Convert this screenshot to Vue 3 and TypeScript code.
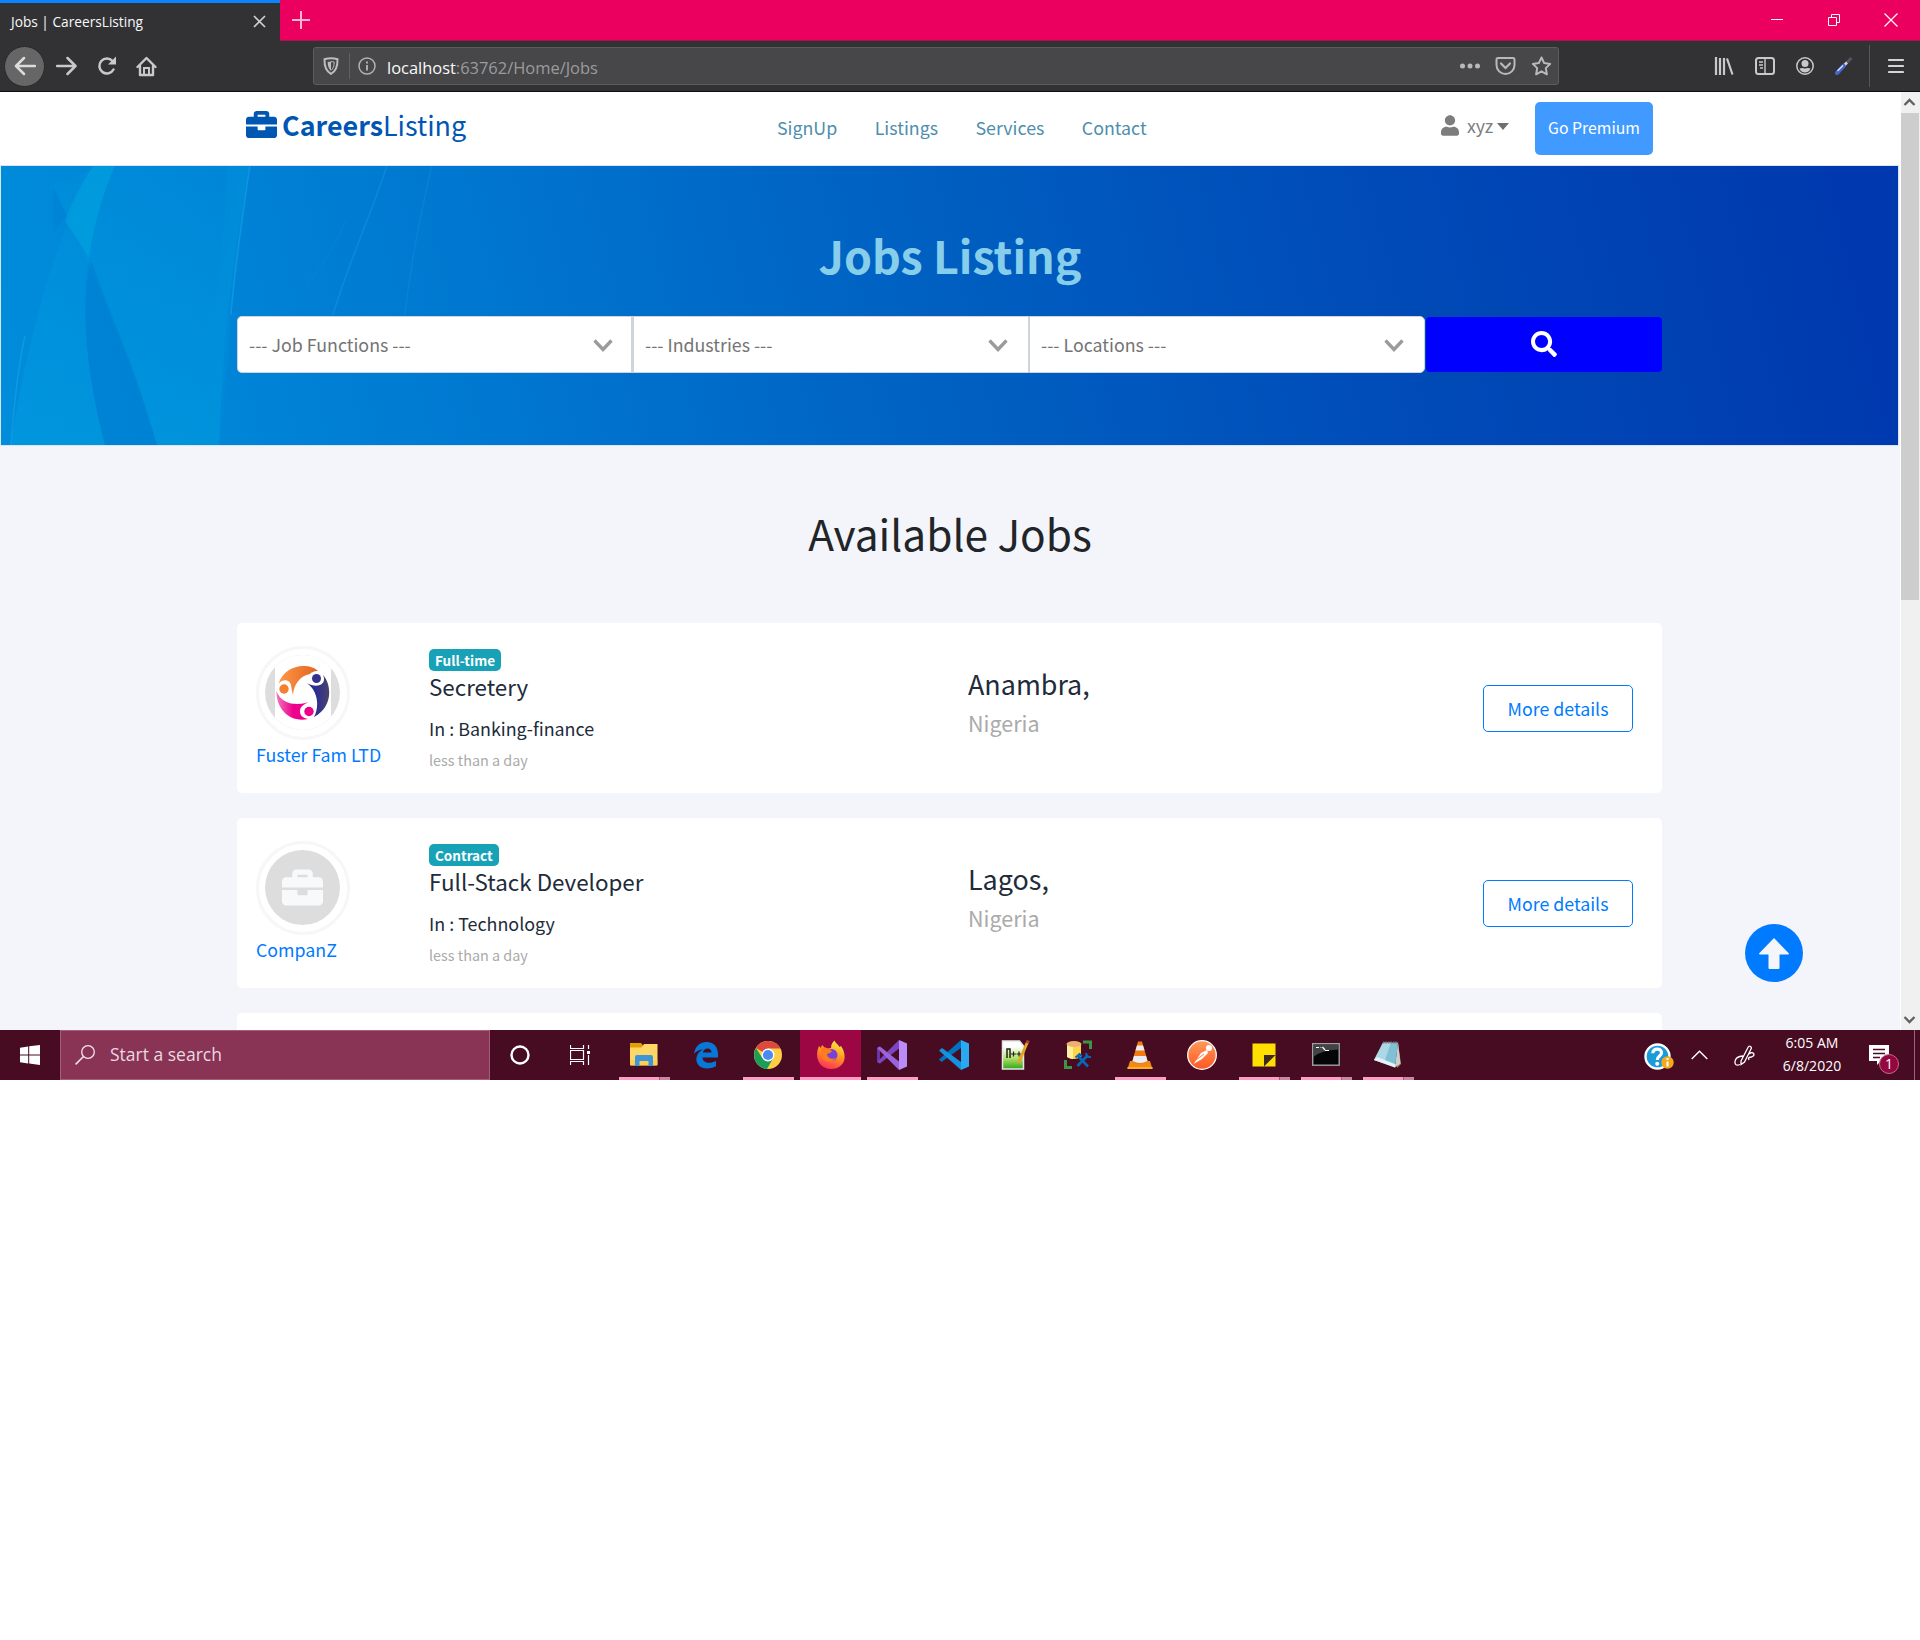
<script setup lang="ts">
interface Job { company: string; type: string; title: string; field: string; age: string; city: string; country: string; logo: boolean }
const jobs: Job[] = [
  { company: 'Fuster Fam LTD', type: 'Full-time', title: 'Secretery', field: 'Banking-finance', age: 'less than a day', city: 'Anambra,', country: 'Nigeria', logo: true },
  { company: 'CompanZ', type: 'Contract', title: 'Full-Stack Developer', field: 'Technology', age: 'less than a day', city: 'Lagos,', country: 'Nigeria', logo: false },
]
const links = ['SignUp', 'Listings', 'Services', 'Contact']
const filters = ['Job Functions', 'Industries', 'Locations']
const briefcase = 'M320 336c0 8.84-7.16 16-16 16h-96c-8.84 0-16-7.16-16-16v-48H0v144c0 25.6 22.4 48 48 48h416c25.6 0 48-22.4 48-48V288H320v48zm144-208h-80V80c0-25.6-22.4-48-48-48H176c-25.6 0-48 22.4-48 48v48H48c-25.6 0-48 22.4-48 48v80h512v-80c0-25.6-22.4-48-48-48zm-144 0H192V96h128v32z'
</script>

<template>
  <div class="screen">
    <header class="tabs">
      <div class="tab">
        <span class="m tab-title">Jobs | CareersListing</span>
        <svg class="tab-x" width="13" height="13" viewBox="0 0 13 13"><path d="M1 1l11 11M12 1L1 12" stroke="#d0d0d2" stroke-width="1.7" /></svg>
      </div>
      <svg class="plus" width="18" height="18" viewBox="0 0 18 18"><path d="M9 0v18M0 9h18" stroke="#fbb6d1" stroke-width="2" /></svg>
      <div class="win">
        <svg width="14" height="14" viewBox="0 0 14 14"><path d="M1 6.500h12" stroke="#fff" /></svg>
        <svg width="14" height="14" viewBox="0 0 14 14"><path d="M1.500 4.500h8v8h-8zM4.500 4.500v-3h8v8h-3" fill="none" stroke="#fff" /></svg>
        <svg width="14" height="14" viewBox="0 0 14 14"><path d="M.5.5l13 13M13.500.5l-13 13" stroke="#fff" stroke-width="1.200" /></svg>
      </div>
    </header>

    <div class="toolbar">
      <div class="tools-left">
        <span class="back"><svg width="22" height="20" viewBox="0 0 22 20"><path d="M21 10H2M10 2L2 10l8 8" fill="none" stroke="#dcdcdd" stroke-width="2.500" stroke-linecap="round" stroke-linejoin="round" /></svg></span>
        <svg width="22" height="20" viewBox="0 0 22 20"><path d="M1 10h18M11.500 2l8 8-8 8" fill="none" stroke="#c9c9ca" stroke-width="2.500" stroke-linecap="round" stroke-linejoin="round" /></svg>
        <svg width="20" height="20" viewBox="0 0 20 20"><path d="M16.500 13.500A7.500 7.500 0 1 1 15.500 5" fill="none" stroke="#c9c9ca" stroke-width="2.500" stroke-linecap="round" /><path d="M19 .5v8h-8z" fill="#c9c9ca" /></svg>
        <svg width="21" height="21" viewBox="0 0 21 21"><path d="M1.500 11L10.500 2l9 9M4 10v9h13v-9" fill="none" stroke="#c9c9ca" stroke-width="2.400" stroke-linecap="round" stroke-linejoin="round" /><path d="M8 19v-7h5v7" fill="none" stroke="#c9c9ca" stroke-width="2" /></svg>
      </div>
      <div class="url">
        <svg class="shield" width="16" height="18" viewBox="0 0 16 18"><path d="M8 1.200c2.500 0 4.500.3 6.500 1 .2 6.500-.8 11.500-6.500 14.600C2.300 13.700 1.300 8.700 1.500 2.200c2-.7 4-1 6.500-1z" fill="none" stroke="#bdbdbf" stroke-width="2" /><path d="M8 4.500v9C5.500 11.500 4.700 9 4.700 5z" fill="#bdbdbf" /><path d="M8 4.700c1.200 0 2.200.1 3.200.4 0 3.500-.8 6.300-3.200 8.300" fill="none" stroke="#bdbdbf" /></svg>
        <i class="url-sep"></i>
        <svg class="info" width="18" height="18" viewBox="0 0 18 18"><circle cx="9" cy="9" r="8" fill="none" stroke="#b1b1b3" stroke-width="1.500" /><path d="M9 8v5.500M9 4.500v2" stroke="#b1b1b3" stroke-width="1.900" /></svg>
        <span class="m url-text"><b>localhost</b>:63762/Home/Jobs</span>
        <div class="url-icons">
          <svg width="20" height="20" viewBox="0 0 20 20"><g fill="#b9b9bb"><circle cx="2.500" cy="10" r="2.500" /><circle cx="10" cy="10" r="2.500" /><circle cx="17.500" cy="10" r="2.500" /></g></svg>
          <svg width="21" height="20" viewBox="0 0 21 20"><path d="M3 2h15q1.500 0 1.500 1.500V9a9 9 0 0 1-18 0V3.500Q1.500 2 3 2z" fill="none" stroke="#b9b9bb" stroke-width="2" /><path d="M6 7.500l4.500 4.500L15 7.500" fill="none" stroke="#b9b9bb" stroke-width="2.200" stroke-linecap="round" /></svg>
          <svg width="21" height="20" viewBox="0 0 21 20"><path d="M10.500 1.500l2.700 5.600 6 .8-4.400 4.200 1.100 6.200-5.400-3-5.400 3 1.100-6.200L1.800 7.900l6-.8z" fill="none" stroke="#b9b9bb" stroke-width="2" stroke-linejoin="round" /></svg>
        </div>
      </div>
      <div class="tools-right">
        <svg width="20" height="18" viewBox="0 0 20 18"><path d="M2 0v18M6 1v17M10 1v17M13 1.500L18.500 17.500" stroke="#c9c9ca" stroke-width="2.200" /></svg>
        <svg width="20" height="18" viewBox="0 0 20 18"><rect x="1" y="1" width="18" height="16" rx="2.500" fill="none" stroke="#c9c9ca" stroke-width="2" /><path d="M10 1v16M4 5h4M4 8h4M5 11h3" stroke="#c9c9ca" stroke-width="1.400" /></svg>
        <svg width="18" height="18" viewBox="0 0 18 18"><circle cx="9" cy="9" r="8.200" fill="none" stroke="#c9c9ca" stroke-width="1.500" /><circle cx="9" cy="6.500" r="3.500" fill="#c9c9ca" /><path d="M3.500 11.500q2.500-1 5.500 0 3-1 5.500 0-1.500 4-5.500 4t-5.500-4z" fill="#c9c9ca" /></svg>
        <svg width="18" height="18" viewBox="0 0 18 18"><path d="M10 7.500L16.500 1" stroke="#55555a" stroke-width="3" /><path d="M8 9.500L12 5.500" stroke="#c8d4ee" stroke-width="2.500" /><path d="M2 16L8.500 9" stroke="#4665c8" stroke-width="4.200" stroke-linecap="round" /><path d="M2.500 14L8 8.500" stroke="#dfe6f7" stroke-width="1.200" /></svg>
        <i class="tool-sep"></i>
        <svg width="16" height="16" viewBox="0 0 16 16"><path d="M1 2h14M1 8h14M1 14h14" stroke="#d4d4d5" stroke-width="2.200" stroke-linecap="round" /></svg>
      </div>
    </div>

    <div class="viewport">
      <main class="page">
        <nav class="nav">
          <div class="brand"><svg width="31" height="31" viewBox="0 0 512 512"><path :d="briefcase" fill="#0056b3" /></svg><b class="m">Careers</b><span class="m">Listing</span></div>
          <div class="links"><a v-for="l in links" :key="l" class="m">{{ l }}</a></div>
          <div class="user">
            <svg width="18" height="21" viewBox="0 0 448 512"><path d="M224 256c70.700 0 128-57.300 128-128S294.700 0 224 0 96 57.300 96 128s57.300 128 128 128zm89.600 32h-16.700c-22.200 10.200-46.900 16-72.900 16s-50.600-5.800-72.900-16h-16.700C60.200 288 0 348.200 0 422.400V464c0 26.500 21.500 48 48 48h352c26.500 0 48-21.500 48-48v-41.600c0-74.200-60.200-134.400-134.400-134.400z" fill="#7d7d7d" /></svg>
            <span class="m">xyz</span><i class="caret"></i>
          </div>
          <button class="premium"><span class="m">Go Premium</span></button>
        </nav>

        <section class="hero">
          <svg class="waves" width="1898" height="279" viewBox="0 0 1898 279" preserveAspectRatio="none">
            <defs>
              <linearGradient id="sea" gradientUnits="userSpaceOnUse" x1="0" y1="279" x2="1800" y2="-150"><stop offset="0" stop-color="#008ddb" /><stop offset=".12" stop-color="#0085d7" /><stop offset=".25" stop-color="#0079d1" /><stop offset=".38" stop-color="#006cca" /><stop offset=".54" stop-color="#005dc0" /><stop offset=".72" stop-color="#004db9" /><stop offset="1" stop-color="#0039af" /></linearGradient>
              <linearGradient id="glow" x1="0" y1="0" x2="0" y2="1"><stop offset="0" stop-color="#00a0e0" stop-opacity=".12" /><stop offset="1" stop-color="#00a0e0" stop-opacity=".5" /></linearGradient>
              <linearGradient id="side" x1="0" y1="0" x2="1" y2="0"><stop offset="0" stop-color="#008fdc" stop-opacity="0" /><stop offset="1" stop-color="#0096dd" stop-opacity=".4" /></linearGradient>
            </defs>
            <rect width="1898" height="279" fill="url(#sea)" />
            <path d="M50 20Q82 78 90 104C108 150 136 210 156 279H218C222 190 230 90 249 0H100Z" fill="url(#glow)" />
            <path d="M92 0C60 60 28 160 10 279H104C84 200 80 140 88 90Q96 40 114 0Z" fill="url(#glow)" />
            <path d="M92 0Q72 30 64 55Q76 72 88 92Q96 40 114 0Z" fill="#00a5e0" opacity=".5" />
            <path d="M52 20L66 50 53 66Z" fill="#0080d2" opacity=".5" />
            <path d="M90 95C110 150 136 205 156 279H104C84 200 80 140 90 95Z" fill="#0080d3" opacity=".7" />
            <path d="M180 279Q225 120 226 0H249Q234 100 230 149L220 279Z" fill="url(#side)" />
            <path d="M249 0Q234 100 230 149" fill="none" stroke="#11a0e2" stroke-width="1.500" opacity=".7" />
            <path d="M386 0C370 50 350 90 332 149" fill="none" stroke="#1597df" stroke-width="1.500" opacity=".5" />
            <path d="M345 55Q330 90 305 120" fill="none" stroke="#1597df" stroke-width="1.500" opacity=".15" />
            <path d="M431 0Q412 80 404 149" fill="none" stroke="#1597df" stroke-width="1.500" opacity=".3" />
            <path d="M10 279Q15 210 24 170" fill="none" stroke="#1ba8e4" stroke-width="1.500" opacity=".5" />
          </svg>
          <div class="hero-in">
            <h1><span class="m">Jobs Listing</span></h1>
            <form class="search">
              <div v-for="f in filters" :key="f" class="select"><span class="m">--- {{ f }} ---</span><svg width="20" height="13" viewBox="0 0 20 13"><path d="M1.500 1.500L10 10.500 18.500 1.500" fill="none" stroke="#9b9b9b" stroke-width="3.300" /></svg></div>
              <button type="button" class="go"><svg width="26" height="26" viewBox="0 0 512 512"><path d="M505 442.700L405.300 343c-4.500-4.500-10.600-7-17-7H372c27.600-35.300 44-79.700 44-128C416 93.100 322.900 0 208 0S0 93.100 0 208s93.100 208 208 208c48.300 0 92.700-16.400 128-44v16.300c0 6.400 2.500 12.500 7 17l99.700 99.700c9.400 9.400 24.600 9.400 33.900 0l28.300-28.300c9.400-9.400 9.400-24.600.1-34zM208 336c-70.700 0-128-57.200-128-128 0-70.700 57.200-128 128-128 70.700 0 128 57.200 128 128 0 70.700-57.200 128-128 128z" fill="#fff" /></svg></button>
            </form>
          </div>
        </section>

        <h2><span class="m">Available Jobs</span></h2>
        <section class="jobs">
          <article v-for="j in jobs" :key="j.title" class="job">
            <div class="co">
              <div class="ring">
                <div class="disc">
                  <div v-if="j.logo" class="logo"><svg width="56" height="75" viewBox="0 0 56 75">
                    <defs><linearGradient id="or"><stop offset="0" stop-color="#ff9648" /><stop offset="1" stop-color="#e2641f" /></linearGradient><linearGradient id="pk"><stop offset="0" stop-color="#f276bb" /><stop offset=".5" stop-color="#ec008c" /></linearGradient><linearGradient id="nv"><stop offset=".4" stop-color="#2c2d92" /><stop offset="1" stop-color="#4a4568" /></linearGradient></defs>
                    <path d="M3.500 29C7 17 18 11 28 11C35 11 40 13 43 16C38 16 36 18 35 19C25 21 19 29 18 40C17 36 16.500 34 16 30C15 25 8 23 3.500 29Z" fill="url(#or)" />
                    <circle cx="9" cy="34" r="4.700" fill="#f58030" />
                    <path d="M1.500 36C5 46 14 49 22 49C28 49 32 48 35 46C30 49 25 51 25 56C25 61 28 63 33 64C15 68 1 54 1.500 36Z" fill="url(#pk)" />
                    <circle cx="34" cy="56.500" r="4.700" fill="#ec008c" />
                    <path d="M48 20C57 30 58 52 39 62C44 53 44 37 32 28C40 33 50 31 49 23Z" fill="url(#nv)" />
                    <circle cx="41.500" cy="23.500" r="4.500" fill="#33338f" />
                  </svg></div>
                  <svg v-else width="41" height="41" viewBox="0 0 512 512"><path :d="briefcase" fill="#f8f9fb" /></svg>
                </div>
              </div>
              <a class="m">{{ j.company }}</a>
            </div>
            <div class="info-col">
              <span class="badge"><span class="m">{{ j.type }}</span></span>
              <div class="title"><span class="m">{{ j.title }}</span></div>
              <div class="field"><span class="m">In : {{ j.field }}</span></div>
              <div class="age"><span class="m">{{ j.age }}</span></div>
            </div>
            <div class="place"><div class="city"><span class="m">{{ j.city }}</span></div><div class="country"><span class="m">{{ j.country }}</span></div></div>
            <button class="more"><span class="m">More details</span></button>
          </article>
          <article class="job"></article>
        </section>
        <div class="top"><svg width="30" height="31" viewBox="0 0 30 31"><path d="M15 0L30 15.500Q30 16.500 29 16.500H20.500V30Q20.500 31 19.500 31H10.500Q9.500 31 9.500 30V16.500H1Q0 16.500 0 15.500Z" fill="#f4f6fb" /></svg></div>
      </main>
      <aside class="scroll">
        <svg width="18" height="21" viewBox="0 0 18 21"><path d="M3.500 13L8.500 8l5 5" fill="none" stroke="#606060" stroke-width="2.300" /></svg>
        <div class="thumb"></div>
        <svg class="down" width="18" height="21" viewBox="0 0 18 21"><path d="M3.500 8l5 5 5-5" fill="none" stroke="#606060" stroke-width="2.300" /></svg>
      </aside>
    </div>

    <footer class="taskbar">
      <div class="start"><svg width="20" height="20" viewBox="0 0 20 20"><path d="M0 2.800L8.200 1.500V9.400H0zM9.200 1.300L20 0v9.400H9.200zM0 10.400h8.200v8L0 17.200zM9.200 10.400H20V20L9.200 18.600z" fill="#fff" /></svg></div>
      <div class="find"><svg width="20" height="20" viewBox="0 0 20 20"><circle cx="13" cy="7" r="6.300" fill="none" stroke="#f3e7ec" stroke-width="1.300" /><path d="M8.500 11.500L.6 19.400" stroke="#f3e7ec" stroke-width="1.500" /></svg><span class="m">Start a search</span></div>
      <div class="cell"><svg width="20" height="20" viewBox="0 0 20 20"><circle cx="10" cy="10" r="8.500" fill="none" stroke="#fff" stroke-width="2.400" /></svg></div>
      <div class="cell"><svg width="20" height="20" viewBox="0 0 20 20"><path d="M.5 0v3.500h13V0M.5 5.500h13v9H.5zM.5 20v-3.500h13V20M18.500 0v4M18.500 10v10" fill="none" stroke="#fff" stroke-width="1.200" /><path d="M17 6h3v3h-3z" fill="#fff" /></svg></div>
      <div class="apps">
        <div class="app on multi"><svg viewBox="0 0 30 30"><path d="M1 3h11l2 2.500V9H1z" fill="#e2a000" /><path d="M1 7.500h11.500L15 4h13.500v20.500q0 1-1 1H2q-1 0-1-1z" fill="#ffd767" /><path d="M1 20h27.500v4.500q0 1-1 1H2q-1 0-1-1z" fill="#fdca45" opacity=".6" /><path d="M6 26v-9q0-2 2-2h14q2 0 2 2v9h-4.500v-5h-9v5z" fill="#3c96d8" /></svg></div>
        <div class="app"><svg viewBox="0 0 30 30"><path d="M3 14C4 7 8 2 15.500 2C23 2 27 7.500 27 14v3.500H11.500c.3 6 8 6.500 13.500 3.500v5.200C14 31.500 4 27 5.500 17.500 6.200 13.500 9 11 12 9.500 9 9.500 5 11 3 14zm9-1.500h8.500C20.500 7 12.500 7.500 12 12.500z" fill="#0878d7" /></svg></div>
        <div class="app on"><svg viewBox="0 0 30 30"><circle cx="15" cy="15" r="14" fill="#ffce44" /><path d="M15 15L3 8A14 14 0 0 1 27.500 8.500H15z" fill="#dc4a3e" /><path d="M3 8A14 14 0 0 0 14 29l6-10.500-11-1z" fill="#1a9f5a" /><circle cx="15" cy="15" r="6.500" fill="#fff" /><circle cx="15" cy="15" r="5.100" fill="#4a8af4" /></svg></div>
        <div class="app on active"><svg viewBox="0 0 30 30"><defs><linearGradient id="fx" x1=".7" y1="0" x2=".3" y2="1"><stop offset="0" stop-color="#fff044" /><stop offset=".45" stop-color="#ff9a1f" /><stop offset="1" stop-color="#ff2a5f" /></linearGradient></defs><path d="M18.500.5C20 4 22 4 23.500 7L25 6C33 18 27 29 15 29S-2 17 3 6l2 2 1-3 4 4 5-1C15 4 17 2 18.500.5z" fill="url(#fx)" /><circle cx="15.500" cy="15" r="6" fill="#7743d6" /><path d="M5 8c4-1 6 0 8 1l3 2c-1 2-3 2-5 3 0 4 5 6 9 4-4 6-15 4-15-3z" fill="#ff7a20" /></svg></div>
        <div class="app on"><svg viewBox="0 0 30 30"><path d="M0 8l3-1.500V23.500L0 22z" fill="#6b35a8" /><path d="M0 22l3 1.500L22 8.500V0z" fill="#7d45c4" /><path d="M0 8l3-1.500L22 21.500V30z" fill="#9a63dc" /><path d="M22 0l8 3.500v23L22 30z" fill="#b98cf7" /></svg></div>
        <div class="app"><svg viewBox="0 0 30 30"><path d="M0 19.500l2.500 2.500L22 8V0z" fill="#0072bf" /><path d="M0 10.500L3 8l19 14v8z" fill="#1492dc" /><path d="M22 0l8 3.500v23L22 30z" fill="#27aaf2" /></svg></div>
        <div class="app"><svg viewBox="0 0 30 30"><defs><linearGradient id="np" x1="0" y1="0" x2="0" y2="1"><stop offset=".2" stop-color="#fff" /><stop offset=".6" stop-color="#b6e36b" /><stop offset="1" stop-color="#2fa51a" /></linearGradient></defs><path d="M1.500 1h17l4 5v23h-21z" fill="url(#np)" stroke="#e6e6e6" stroke-width="1.500" /><path d="M6 18V9h3v9" fill="none" stroke="#222" stroke-width="1.500" /><path d="M10 14h5M12.500 11.500v5M15.500 14h5M18 11.500v5" stroke="#222" stroke-width="1.200" /><path d="M26.500 2l-9 21" stroke="#e8a325" stroke-width="3" /><path d="M27.200 0.5l-1 2.700" stroke="#b33c32" stroke-width="3.200" /></svg></div>
        <div class="app"><svg viewBox="0 0 30 30"><path d="M4 4v13q7 4 14 0V4z" fill="#fbd64b" /><path d="M4 4v13q3 2 6 2V5z" fill="#fff0a0" /><ellipse cx="11" cy="4" rx="7.500" ry="3" fill="#efb071" /><path d="M20 2h7.500v7M2.500 20v7.500H9" fill="none" stroke="#3e9444" stroke-width="3" /><path d="M15 16l10 10.500M25 15L14.500 26" stroke="#0a65b8" stroke-width="2.600" /><path d="M12.500 17.500l4-3.500 2.500 2.500M23 13l1 4h4" fill="none" stroke="#0a65b8" stroke-width="2" /></svg></div>
        <div class="app on"><svg viewBox="0 0 30 30"><path d="M5 21h20l2.500 8H2.500z" fill="#ef8b16" /><path d="M2.500 27h25v2h-25z" fill="#ffad2f" /><path d="M13 1.500h4L23 22q-8 4-16 0z" fill="#f07c12" /><path d="M12 5.500h6l1.500 5h-9zM9 16h12l1.500 5q-7 4-15 0z" fill="#e9eef2" /></svg></div>
        <div class="app"><svg viewBox="0 0 30 30"><defs><linearGradient id="pm" x1="0" y1="0" x2="0" y2="1"><stop offset="0" stop-color="#ff9a5c" /><stop offset="1" stop-color="#ff5722" /></linearGradient></defs><circle cx="15" cy="15" r="14.300" fill="url(#pm)" stroke="#fff" stroke-width="1.300" /><circle cx="22" cy="8" r="3" fill="#fff" /><path d="M6.500 24L14 13l6-3 1 3-6 6z" fill="#fff" /><path d="M9 20l8-6" stroke="#ff7a44" /></svg></div>
        <div class="app on multi"><svg viewBox="0 0 30 30"><path d="M3.500 3.500h23V15H15v11.500H3.500z" fill="#fee000" /><path d="M15 15h11.500L15 26.500z" fill="#3c2a21" /><path d="M26.500 15v11.500H15z" fill="#fee000" /></svg></div>
        <div class="app on multi"><svg viewBox="0 0 30 30"><rect x="1.700" y="3.700" width="26.500" height="21.500" fill="#050505" stroke="#9ca1a6" stroke-width="1.400" /><path d="M2.500 4.500h25v5Q10 10 2.500 17z" fill="#6d6d70" opacity=".6" /><path d="M5 7.500h3M9.500 7.500h.9M11.500 7l2.500 3M14 10.500h4" stroke="#fff" stroke-width="1.200" /></svg></div>
        <div class="app on multi"><svg viewBox="0 0 30 30"><path d="M25 3l3 21-4 4z" fill="#a38a35" /><path d="M10 2.500h15L22 27.500 1 20z" fill="#7fc0d4" /><path d="M10 2.500h8L11 23 1 20z" fill="#bfe2ec" opacity=".7" /><path d="M1 20l21 7.500 1-3L4 17z" fill="#e8f2f4" /><path d="M25 2.500l2.500 21L22 27.500z" fill="#c7d0d2" /><path d="M10 2.500h15" stroke="#777" stroke-width="1.800" stroke-dasharray="1.500 1" /></svg></div>
      </div>
      <div class="tray">
        <svg class="help" width="30" height="28" viewBox="0 0 30 28"><circle cx="13.500" cy="13.500" r="12" fill="#1b9cd8" stroke="#fff" stroke-width="2.400" /><path d="M8.800 10.300c0-5.800 9-5.500 8.700-.3-.2 3.200-4.200 3-4.200 7" fill="none" stroke="#fff" stroke-width="3.200" /><circle cx="13.200" cy="20.800" r="2" fill="#fff" /><circle cx="23.500" cy="19.500" r="6.200" fill="#f4a91c" /><path d="M23.500 18.500v5M23.500 15v2" stroke="#fff" stroke-width="2" /></svg>
        <svg class="chev" width="17" height="10" viewBox="0 0 17 10"><path d="M.7 9L8.500 1.200 16.300 9" fill="none" stroke="#fff" stroke-width="1.400" /></svg>
        <svg class="pen" width="21" height="21" viewBox="0 0 21 21"><path d="M7 16L14 2.500q1-2 2.500-1t.5 2.500L10.500 17 7 19.500zM9 11Q1.500 11.500 1 16.500t5 3M14 9.500q4-3 5.500-1t-2 3.500q-4 0-2.500 3" fill="none" stroke="#fff" stroke-width="1.300" /></svg>
        <div class="clock"><span class="m">6:05 AM</span><span class="m">6/8/2020</span></div>
        <div class="note"><svg width="20" height="20" viewBox="0 0 20 20"><path d="M0 0h20v16h-8l-4 4v-4H0z" fill="#fff" /><path d="M4 4.500h12M4 8.500h12M4 12.500h7" stroke="#470c22" stroke-width="1.300" /></svg><span class="count">1</span></div>
        <i class="edge"></i>
      </div>
    </footer>
  </div>
</template>

<style>
body { margin: 0; background: #fff; }
</style>
<style scoped>
* { box-sizing: border-box; }
svg { display: block; flex: none; }
button { font: inherit; padding: 0; border: 0; }
.screen { width: 1920px; height: 1640px; background: #fff; overflow: hidden; font-family: "Noto Sans CJK SC", "Noto Sans", sans-serif; }
.m { white-space: nowrap; }

.tabs { height: 41px; display: flex; align-items: center; background: #eb005f; border-bottom: 1px solid #a51450; font-family: "Open Sans", sans-serif; }
.tab { width: 280px; height: 41px; align-self: flex-start; background: #323234; border-top: 3px solid #0a84ff; display: flex; align-items: center; padding: 0 14px 0 11px; justify-content: space-between; }
.tab-title { color: #f9f9fa; font-size: 13.700px; padding-bottom: 2px; }
.tab-x { margin-top: -1px; }
.plus { margin-left: 12px; }
.win { margin-left: auto; display: flex; gap: 43px; padding-right: 22px; }

.toolbar { height: 51px; background: #323234; border-bottom: 1px solid #0c0c0d; display: flex; align-items: center; font-family: "Open Sans", sans-serif; }
.tools-left { width: 313px; display: flex; align-items: center; padding-left: 4px; gap: 19px; }
.back { width: 41px; height: 41px; margin-right: -8px; border-radius: 50%; background: #666667; border: 1px solid #29292b; display: flex; align-items: center; justify-content: center; }
.url { width: 1246px; height: 38px; background: #474749; border: 1px solid #5d5d5f; border-radius: 3px; display: flex; align-items: center; }
.shield { margin-left: 9px; }
.url-sep { width: 1px; height: 26px; margin: 0 8px 0 10px; background: #616163; }
.url-text { margin-left: 11px; font-size: 16.450px; color: #9b9b9c; padding-top: 2px; }
.url-text b { font-weight: 400; color: #f9f9fa; }
.url-icons { margin-left: auto; display: flex; gap: 15px; padding-right: 6px; }
.tools-right { margin-left: auto; display: flex; align-items: center; padding-right: 16px; gap: 21px; }
.tool-sep { width: 1px; height: 42px; background: #57575a; margin: 0 -3px 0 -5px; }

.viewport { height: 938px; display: flex; overflow: hidden; }
.page { width: 1900px; background: #f4f5fa; position: relative; }
.nav { height: 73px; background: #fff; display: grid; grid-template-columns: 531px 664px 94px 118px; padding-left: 246px; align-items: center; }
.brand { display: flex; align-items: center; font-size: 26.900px; line-height: 40px; color: #0056b3; margin-top: -8px; }
.brand b { margin-left: 5px; font-weight: 700; }
.links { display: flex; gap: 37.500px; font-size: 17.800px; line-height: 26px; color: #4e8eac; margin-top: -3px; }
.user { display: flex; align-items: center; font-size: 17.800px; line-height: 26px; color: #7d7d7d; margin-top: -6px; }
.user span { margin: -2px 0 0 8px; }
.caret { margin: 1px 0 0 4px; border: 6px solid transparent; border-top: 7px solid #6f6f6f; border-bottom: 0; }
.premium { width: 118px; height: 53px; background: #409aff; border-radius: 5px; color: #fff; font-size: 15.800px; padding-bottom: 2px; }

.hero { height: 281px; border: 1px solid #dbe5ef; position: relative; margin-right: 1px; }
.waves { position: absolute; left: 0; top: 0; width: 100%; }
.hero-in { position: relative; padding: 58px 235px 0 236px; }
h1 { margin: 0; font-size: 44.800px; line-height: 62px; color: #87ceeb; text-align: center; font-weight: 700; }
.search { margin-top: 30px; width: 1425px; height: 57px; display: flex; align-items: center; }
.select { width: 396px; height: 57px; background: #fff; border: 1px solid #ced4da; display: flex; align-items: center; justify-content: space-between; padding: 1px 20px 0 11px; font-size: 17.800px; color: #747474; }
.select span { padding-bottom: 2px; }
.select:first-child { border-radius: 5px 0 0 5px; border-right-width: 2px; padding-right: 18px; }
.select:nth-child(3) { border-radius: 0 5px 5px 0; }
.go { width: 236px; height: 55px; margin-left: 1px; border-radius: 4px; background: #00f; display: flex; align-items: center; justify-content: center; padding-bottom: 2px; }

h2 { margin: 52px 0 0; font-size: 42.400px; line-height: 70px; font-weight: 400; text-align: center; color: #212529; }
.jobs { margin: 55px 0 0 237px; width: 1425px; display: flex; flex-direction: column; gap: 25px; }
.job { height: 170px; background: #fff; border-radius: 5px; display: grid; grid-template-columns: 173px 539px 515px 150px; padding-left: 19px; flex: none; }
.co { padding-top: 23px; color: #007bff; font-size: 17.800px; line-height: 26px; }
.ring { width: 94px; height: 94px; border: 3px solid #f7f7f7; border-radius: 50%; padding: 6px; margin-bottom: 1px; }
.disc { width: 75px; height: 75px; border-radius: 50%; background: #ddd; overflow: hidden; display: flex; align-items: center; justify-content: center; }
.logo { width: 56px; height: 75px; background: #fff; }
.info-col { padding-top: 26px; color: #212b3a; }
.badge { display: block; width: fit-content; height: 22px; line-height: 22px; padding: 0 6px; border-radius: 5px; background: #18a2b8; color: #fff; font-weight: 700; font-size: 13.500px; }
.title { font-size: 22.400px; line-height: 32px; margin-top: -1px; }
.field { font-size: 17.900px; line-height: 26px; margin: 13px 0 0; }
.age { font-size: 14.400px; line-height: 22px; margin: 8px 0 0; color: #aaa; }
.place { padding-top: 41px; }
.city { font-size: 26.900px; line-height: 40px; color: #212b3a; }
.country { font-size: 21.500px; line-height: 32px; color: #aaa; margin-top: 3px; }
.more { width: 150px; height: 47px; margin-top: 62px; background: #fff; border: 1px solid #007bff; border-radius: 5px; color: #007bff; font-size: 17.800px; padding-bottom: 2px; }
.top { position: absolute; left: 1745px; top: 832px; width: 58px; height: 58px; border-radius: 50%; background: #007bff; display: flex; align-items: center; justify-content: center; }

.scroll { width: 20px; background: #f0f0f0; border-left: 1px solid #fff; display: flex; flex-direction: column; }
.thumb { height: 487px; background: #cdcdcd; margin-right: 1px; }
.down { margin-top: auto; }

.taskbar { height: 50px; background: #470c22; display: flex; align-items: center; font-family: "Open Sans", sans-serif; color: #fff; }
.start { width: 60px; display: flex; justify-content: center; }
.find { width: 430px; height: 50px; background: #893355; border: 1px solid #a0607c; display: flex; align-items: center; padding-left: 14px; gap: 15px; font-size: 17.500px; color: #ead9e0; }
.find span { padding-bottom: 2px; }
.cell { width: 60px; display: flex; justify-content: center; }
.apps { display: flex; margin-left: 3px; }
.app { width: 62px; height: 50px; display: flex; flex-direction: column; align-items: center; padding-top: 10px; }
.app svg { width: 30px; height: 30px; }
.app.on::after { content: ''; width: 51px; height: 3px; margin-top: 7px; background: #ff9dc6; }
.app.multi::after { background: linear-gradient(90deg, #ff9dc6 40px, #9a5f7c 40px 41px, #cd85a6 41px); }
.app.active { background: #9c0642; width: 61px; margin-left: 1px; }
.app.active::after { width: 61px; }
.tray { margin-left: auto; display: flex; align-items: center; height: 50px; }
.help { margin-right: 17px; margin-top: 3px; }
.chev { margin-right: 26px; }
.pen { margin-right: 26px; }
.clock { width: 62px; display: flex; flex-direction: column; align-items: center; font-size: 14px; line-height: 23px; padding-bottom: 2px; }
.note { width: 20px; height: 20px; margin: 0 25px 0 26px; position: relative; }
.count { position: absolute; left: 10px; top: 9px; width: 20px; height: 20px; border-radius: 50%; background: #94063f; border: 1px solid #c66b90; font-size: 14px; line-height: 18px; text-align: center; }
.edge { width: 1px; height: 50px; background: #91687a; margin-right: 5px; }
</style>
